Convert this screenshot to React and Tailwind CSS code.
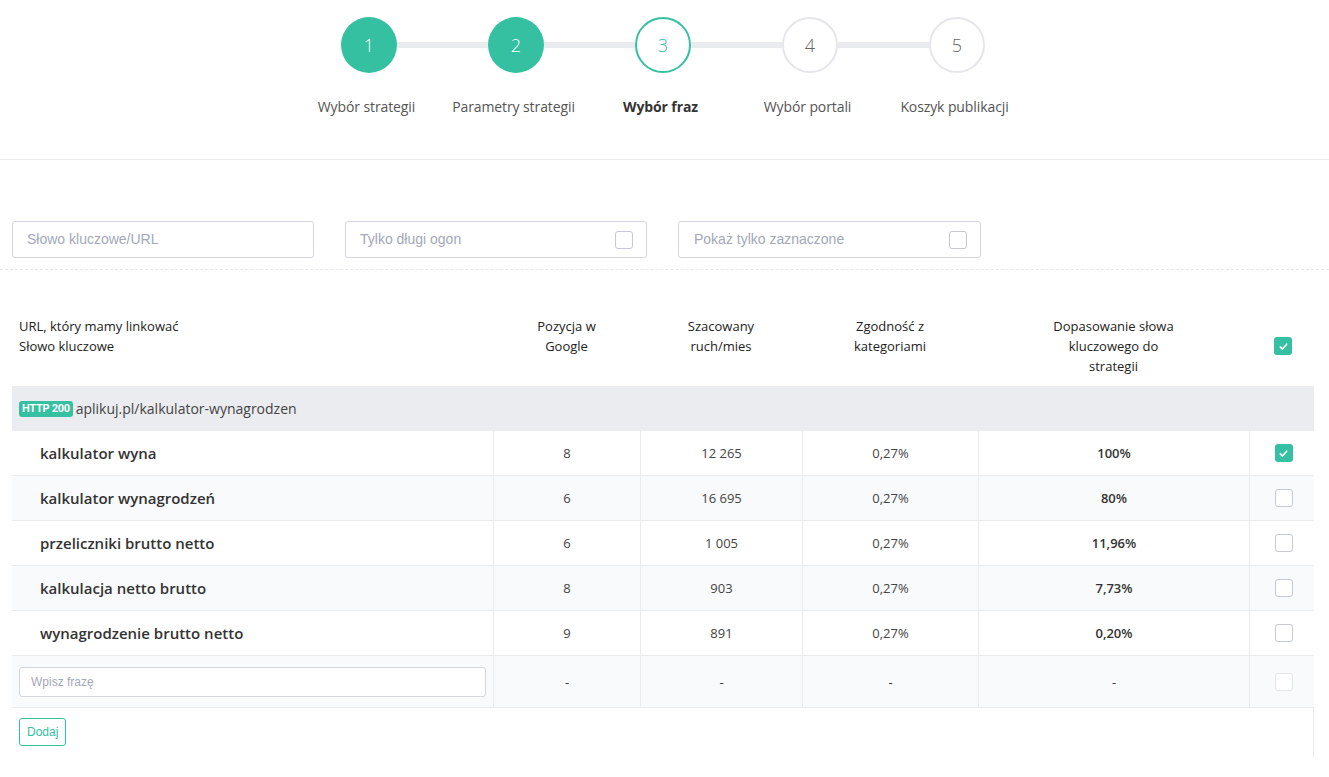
const steps = [
  { n: 1, label: 'Wybór strategii', state: 'done' },
  { n: 2, label: 'Parametry strategii', state: 'done' },
  { n: 3, label: 'Wybór fraz', state: 'active' },
  { n: 4, label: 'Wybór portali', state: 'todo' },
  { n: 5, label: 'Koszyk publikacji', state: 'todo' },
];

const rows = [
  { kw: 'kalkulator wyna', pos: '8', traffic: '12 265', cat: '0,27%', match: '100%', checked: true },
  { kw: 'kalkulator wynagrodzeń', pos: '6', traffic: '16 695', cat: '0,27%', match: '80%', checked: false },
  { kw: 'przeliczniki brutto netto', pos: '6', traffic: '1 005', cat: '0,27%', match: '11,96%', checked: false },
  { kw: 'kalkulacja netto brutto', pos: '8', traffic: '903', cat: '0,27%', match: '7,73%', checked: false },
  { kw: 'wynagrodzenie brutto netto', pos: '9', traffic: '891', cat: '0,27%', match: '0,20%', checked: false },
];

const cols = 'grid grid-cols-[481px_147px_162px_176px_271px_65px]';

const Checkbox = ({ checked, disabled }) =>
  checked ? (
    <span className="w-[18px] h-[18px] rounded-[3px] bg-[#35c0a1] flex items-center justify-center">
      <svg className="w-[11px] h-[11px]" viewBox="0 0 12 12" fill="none" stroke="white" strokeWidth="1.8" strokeLinecap="round" strokeLinejoin="round">
        <path d="M2.5 6.5l2.3 2.3L9.5 3.5" />
      </svg>
    </span>
  ) : (
    <span
      className={
        'w-[18px] h-[18px] rounded-[3px] border bg-white ' +
        (disabled ? 'border-[#e3e5ea]' : 'border-[#c5c9d4]')
      }
    />
  );

const StepCircle = ({ step }) => {
  if (step.state === 'done') {
    return (
      <div className="w-[56px] h-[56px] rounded-full bg-[#35c0a1] flex items-center justify-center text-white text-[18px] font-light shrink-0">
        {step.n}
      </div>
    );
  }
  if (step.state === 'active') {
    return (
      <div className="w-[56px] h-[56px] rounded-full border-2 border-[#35c0a1] bg-white flex items-center justify-center text-[#35c0a1] text-[18px] font-light shrink-0">
        {step.n}
      </div>
    );
  }
  return (
    <div className="w-[56px] h-[56px] rounded-full border-2 border-[#e4e6eb] bg-white flex items-center justify-center text-[#666] text-[18px] font-light shrink-0">
      {step.n}
    </div>
  );
};

const App = () => {
  return (
    <div className="min-h-screen bg-white text-[#333] font-['Open_Sans',sans-serif]">
      {/* Stepper */}
      <div className="border-b border-[#ebebeb] pt-[17px] pb-[42px]">
        <div className="flex items-center justify-center pr-[3px]">
          {steps.map((s, i) => (
            <div key={s.n} className="flex items-center">
              <StepCircle step={s} />
              {i < steps.length - 1 && <div className="w-[91px] h-[6px] bg-[#e9ebef]" />}
            </div>
          ))}
        </div>
        <div className="flex justify-center mt-[24px] pr-[8px]">
          {steps.map((s) => (
            <div
              key={s.n}
              className={
                'w-[147px] text-center text-[14px] leading-[20px] tracking-[-0.1px] ' +
                (s.state === 'active' ? 'font-bold text-[#333]' : 'text-[#555]')
              }
            >
              {s.label}
            </div>
          ))}
        </div>
      </div>

      {/* Filters */}
      <div className="pt-[61px] pb-[11px] px-[12px] flex gap-[31px] border-b border-dashed border-[#e6e7ea] font-['Liberation_Sans',Arial,sans-serif]">
        <div className="w-[302px] h-[37px] border border-[#d3d6df] rounded-[3px] flex items-center px-[14px] text-[14px] text-[#a3a8b8]">
          Słowo kluczowe/URL
        </div>
        <div className="w-[302px] h-[37px] border border-[#d3d6df] rounded-[3px] flex items-center justify-between pl-[14px] pr-[13px] text-[14px] text-[#a3a8b8]">
          Tylko długi ogon
          <Checkbox />
        </div>
        <div className="w-[303px] h-[37px] border border-[#d3d6df] rounded-[3px] flex items-center justify-between pl-[15px] pr-[13px] text-[14px] text-[#a3a8b8]">
          Pokaż tylko zaznaczone
          <Checkbox />
        </div>
      </div>

      {/* Table */}
      <div className="ml-[12px] w-[1302px] pt-[36px]">
        <div className={cols + ' text-[13px] leading-[20px] text-[#222] pb-[10px] pt-[10px]'}>
          <div className="pl-[7px]">
            <div>URL, który mamy linkować</div>
            <div>Słowo kluczowe</div>
          </div>
          <div className="text-center px-[40px]">Pozycja w Google</div>
          <div className="text-center px-[40px]">Szacowany ruch/mies</div>
          <div className="text-center px-[44px]">Zgodność z kategoriami</div>
          <div className="text-center px-[66px]">Dopasowanie słowa kluczowego do strategii</div>
          <div className="flex items-center justify-center pl-[3px]">
            <Checkbox checked />
          </div>
        </div>

        <div className="h-[45px] bg-[#ebecf0] flex items-center pl-[7px] gap-[3px]">
          <span className="bg-[#35c0a1] text-white text-[11px] font-bold leading-[16px] px-[3px] rounded-[3px] font-['Roboto',sans-serif] tracking-[-0.3px]">
            HTTP 200
          </span>
          <span className="text-[14px] text-[#444]">aplikuj.pl/kalkulator-wynagrodzen</span>
        </div>

        {rows.map((r, i) => (
          <div
            key={r.kw}
            className={cols + ' h-[45px] border-b border-[#e9ebef] ' + (i % 2 === 1 ? 'bg-[#f9fafb]' : 'bg-white')}
          >
            <div className="flex items-center pl-[28px] text-[15px] font-semibold text-[#333]">{r.kw}</div>
            <div className="flex items-center justify-center pt-[2px] border-l border-[#e9ebef] text-[13px] text-[#444]">{r.pos}</div>
            <div className="flex items-center justify-center pt-[2px] border-l border-[#e9ebef] text-[13px] text-[#444]">{r.traffic}</div>
            <div className="flex items-center justify-center pt-[2px] border-l border-[#e9ebef] text-[13px] text-[#444]">{r.cat}</div>
            <div className="flex items-center justify-center pt-[2px] border-l border-[#e9ebef] text-[13px] font-semibold text-[#333]">{r.match}</div>
            <div className="flex items-center justify-center border-l border-[#e9ebef] pl-[3px]">
              <Checkbox checked={r.checked} />
            </div>
          </div>
        ))}

        <div className={cols + ' h-[52px] border-b border-[#e9ebef] bg-[#f9fafb]'}>
          <div className="flex items-center pl-[7px] pr-[7px]">
            <div className="w-full h-[30px] bg-white border border-[#d3d6df] rounded-[3px] flex items-center px-[11px] text-[12px] text-[#a3a8b8] font-['Liberation_Sans',Arial,sans-serif]">
              Wpisz frazę
            </div>
          </div>
          <div className="flex items-center justify-center pt-[2px] border-l border-[#e9ebef] text-[13px] text-[#333]">-</div>
          <div className="flex items-center justify-center pt-[2px] border-l border-[#e9ebef] text-[13px] text-[#333]">-</div>
          <div className="flex items-center justify-center pt-[2px] border-l border-[#e9ebef] text-[13px] text-[#333]">-</div>
          <div className="flex items-center justify-center pt-[2px] border-l border-[#e9ebef] text-[13px] text-[#333]">-</div>
          <div className="flex items-center justify-center border-l border-[#e9ebef] pl-[3px]">
            <Checkbox disabled />
          </div>
        </div>

        <div className="h-[49px] border-r border-[#e9ebef] pl-[7px] pt-[10px]">
          <button className="h-[28px] px-[7px] border border-[#35c0a1] rounded-[3px] text-[12px] text-[#35c0a1] bg-white font-['Liberation_Sans',Arial,sans-serif]">
            Dodaj
          </button>
        </div>
      </div>
    </div>
  );
};

export default App;
